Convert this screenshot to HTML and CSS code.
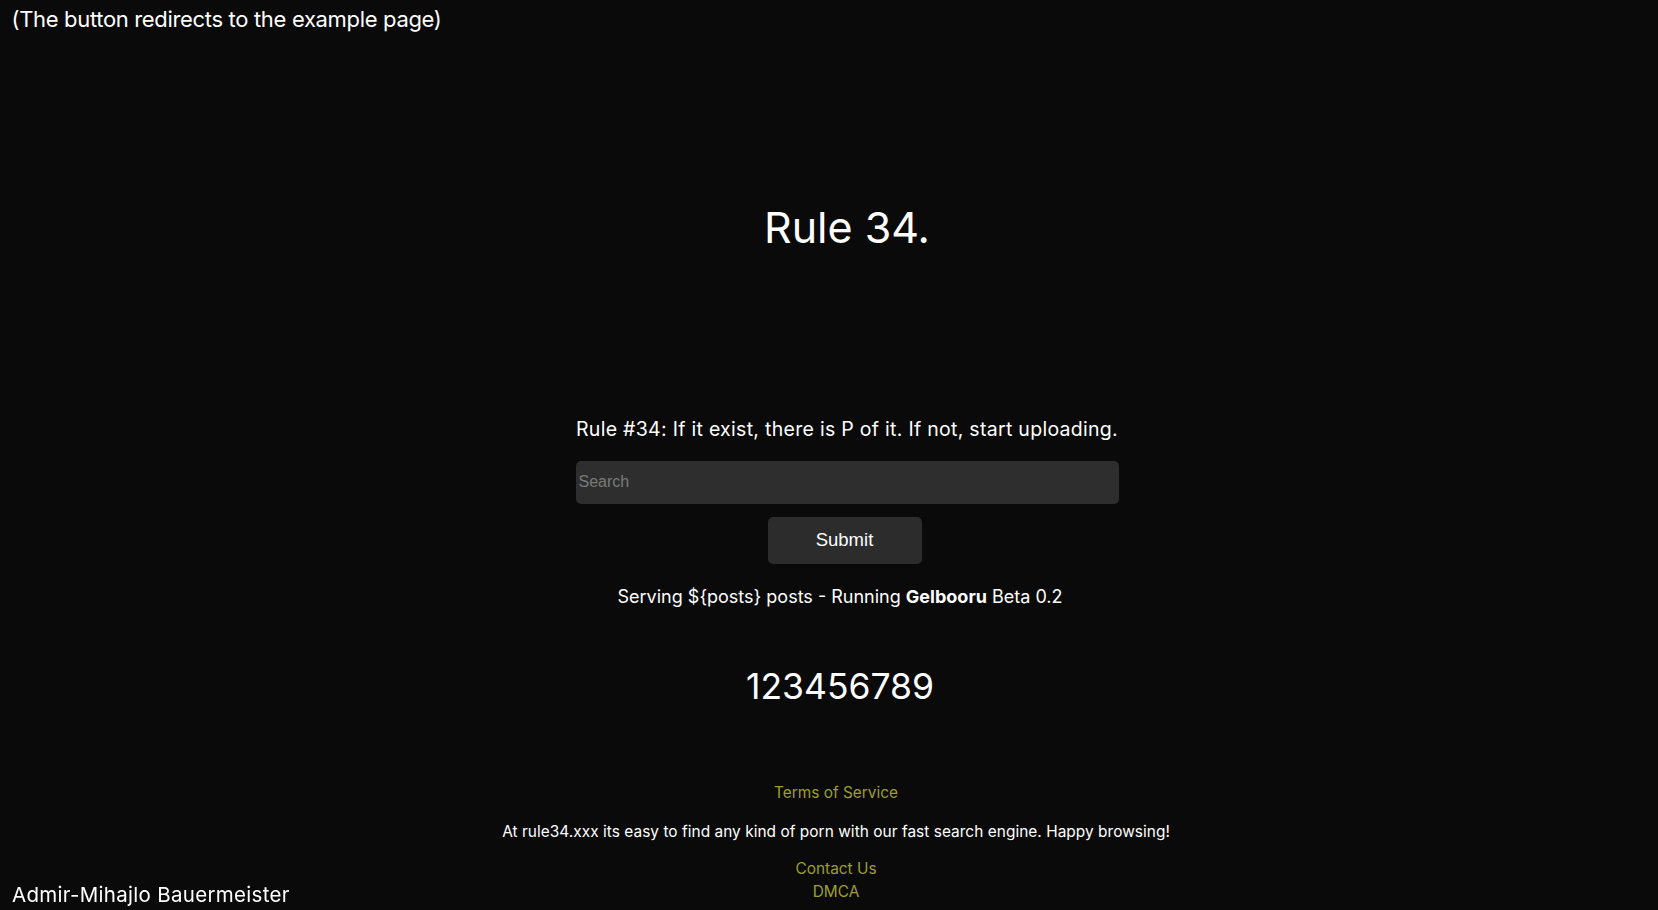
FILE: index.html
```html
<!DOCTYPE html>
<html lang="en">
<head>
<meta charset="utf-8">
<title>Rule 34.</title>
<link rel="stylesheet" href="styles.css">
</head>
<body>
  <p class="note">(The button redirects to the example page)</p>
  <main class="hero">
    <h1 class="title">Rule 34.</h1>
    <section class="search">
      <p class="motto">Rule #34: If it exist, there is P of it. If not, start uploading.</p>
      <form class="search-form">
        <input class="search-input" type="text" placeholder="Search">
        <button class="search-btn" type="button">Submit</button>
      </form>
    </section>
    <section class="stats">
      <p class="stats-line">Serving ${posts} posts - Running <b>Gelbooru</b> Beta 0.2</p>
      <p class="count">123456789</p>
    </section>
    <footer class="footer">
      <a class="footer-link footer-tos" href="#">Terms of Service</a>
      <p class="footer-text">At rule34.xxx its easy to find any kind of porn with our fast search engine. Happy browsing!</p>
      <a class="footer-link footer-contact" href="#">Contact Us</a>
      <a class="footer-link footer-dmca" href="#">DMCA</a>
    </footer>
  </main>
  <p class="author">Admir-Mihajlo Bauermeister</p>
</body>
</html>
```
FILE: styles.css
```css
html, body {
  margin: 0;
  padding: 0;
  background: #0a0a0a;
  color: #ffffff;
  font-family: "Inter", "Lato", sans-serif;
}
p, h1 { margin: 0; }

.note {
  font-size: 22px;
  line-height: 1;
  letter-spacing: -0.33px;
  margin-top: 8px;
  padding-left: 11.5px;
}

.hero {
  display: flex;
  flex-direction: column;
}

.title {
  font-size: 43px;
  font-weight: 400;
  line-height: 1;
  text-align: center;
  margin-top: 176.1px;
  padding-left: 36px;
}

.search {
  display: flex;
  flex-direction: column;
  align-items: center;
  padding-left: 36px;
  margin-top: 171.2px;
}
.motto {
  font-size: 19.5px;
  line-height: 1;
  letter-spacing: 0.29px;
}
.search-form {
  display: flex;
  flex-direction: column;
  align-items: center;
  margin-top: 21.2px;
  gap: 13px;
}
.search-input {
  box-sizing: border-box;
  width: 543px;
  height: 43px;
  border: none;
  border-radius: 5px;
  background: #2e2e2e;
  color: #fff;
  padding: 0 3px;
  font-family: "Liberation Sans", Arial, sans-serif;
  font-size: 16px;
  outline: none;
}
.search-input::placeholder { color: #7a7a7a; }
.search-btn {
  box-sizing: border-box;
  width: 154px;
  height: 47px;
  border: none;
  border-radius: 5px;
  background: #2c2c2c;
  color: #fff;
  font-family: "Liberation Sans", Arial, sans-serif;
  font-size: 18.5px;
  margin-right: 5px;
}

.stats {
  display: flex;
  flex-direction: column;
  align-items: center;
  padding-left: 22px;
}
.stats-line {
  font-size: 18px;
  line-height: 1;
  margin-top: 24.5px;
}
.stats-line b { font-weight: 700; }
.count {
  font-size: 35.5px;
  line-height: 1;
  margin-top: 62.6px;
}

.footer {
  display: flex;
  flex-direction: column;
  align-items: center;
  padding-left: 14px;
  font-size: 15.4px;
  line-height: 1;
}
.footer-link {
  color: #9e9e2c;
  text-decoration: none;
}
.footer-tos { margin-top: 80.3px; }
.footer-text { margin-top: 23.6px; letter-spacing: 0.05px; }
.footer-contact { margin-top: 21.6px; }
.footer-dmca { margin-top: 7.6px; }

.author {
  position: fixed;
  left: 12px;
  bottom: 4.3px;
  font-size: 20.5px;
  line-height: 1;
  letter-spacing: 0.3px;
}
```
